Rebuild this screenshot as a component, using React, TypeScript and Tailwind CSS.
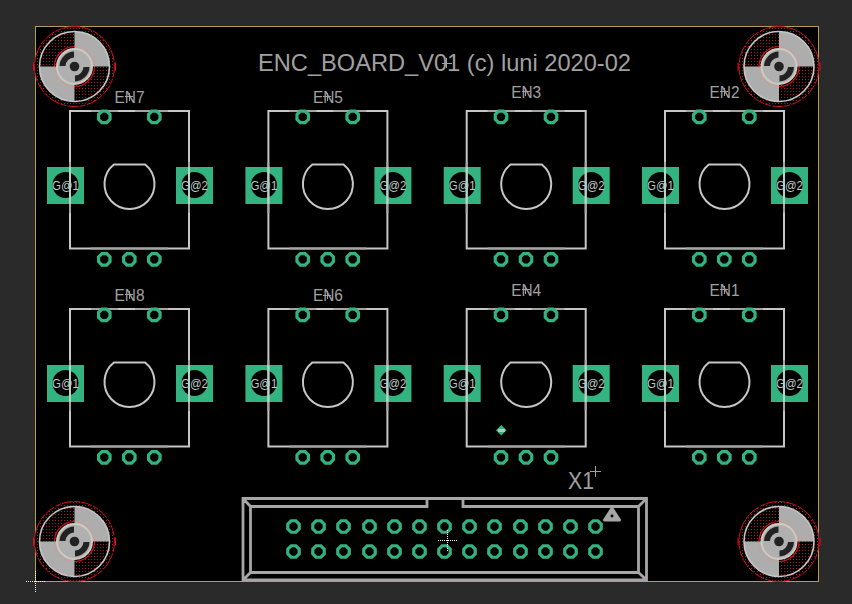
const GREEN = "#33b380";
const LINE = "#c6c6c6";
const LINE_DIM = "#a4a4a4";
const LINE_PAD = "#b4d4c6";
const TEXT = "#a0a0a0";
const CONN = "#a6a6a6";
const RED = "#d4121c";

const cols = [70, 268.4, 466.7, 665];
const rows = [111, 309];
const headerX = [293.5, 318.5, 343.5, 369.5, 394.5, 419.5, 444.5, 469.5, 494.5, 520.5, 545.5, 570.5, 595.5];

const encoders = [
  { name: "EN7", col: 0, row: 0, ly: 96.5 },
  { name: "EN5", col: 1, row: 0, ly: 96.5 },
  { name: "EN3", col: 2, row: 0, ly: 91.5 },
  { name: "EN2", col: 3, row: 0, ly: 91.5 },
  { name: "EN8", col: 0, row: 1, ly: 294.5 },
  { name: "EN6", col: 1, row: 1, ly: 295 },
  { name: "EN4", col: 2, row: 1, ly: 289.5 },
  { name: "EN1", col: 3, row: 1, ly: 289.5 },
];

function Ring({ x, y }: { x: number; y: number }) {
  const pts = [];
  for (let i = 0; i < 8; i++) {
    const a = ((i + 0.5) * Math.PI) / 4;
    pts.push(`${x + 6.2 * Math.cos(a)},${y + 6.2 * Math.sin(a)}`);
  }
  return <polygon points={pts.join(" ")} fill="#000" stroke={GREEN} strokeWidth={3.2} />;
}

function Cross({ x, y, r = 5, color = TEXT }: { x: number; y: number; r?: number; color?: string }) {
  return (
    <path d={`M${x - r} ${y}H${x + r}M${x} ${y - r}V${y + r}`} stroke={color} strokeWidth={1} shapeRendering="crispEdges" />
  );
}

function Encoder({ x, y, name, ly }: { x: number; y: number; name: string; ly: number }) {
  const cx = x + 59.5;
  return (
    <g>
      <rect x={x - 23} y={y + 56} width={37} height={37} fill={GREEN} />
      <rect x={x + 106} y={y + 56} width={37} height={37} fill={GREEN} />
      <circle cx={x - 4.5} cy={y + 74} r={13} fill="#000" />
      <circle cx={x + 124.5} cy={y + 74} r={13} fill="#000" />
      <rect x={x} y={y} width={119} height={137.5} fill="none" stroke={LINE} strokeWidth={2} />
      {/* stop mask overlap, a little darker near the pads */}
      <path
        d={`M${x + 21} ${y}H${x + 48}M${x + 65} ${y}H${x + 98}M${x + 21} ${y + 137.5}H${x + 98}M${x} ${y + 51}V${y + 56}M${x} ${y + 93}V${y + 102}M${x + 119} ${y + 51}V${y + 56}M${x + 119} ${y + 93}V${y + 102}`}
        stroke={LINE_DIM}
        strokeWidth={2}
        fill="none"
      />
      <path d={`M${x} ${y + 56}V${y + 93}M${x + 119} ${y + 56}V${y + 93}`} stroke={LINE_PAD} strokeWidth={2} fill="none" />
      <path
        d={`M${cx - 15.6} ${y + 53.5}A25 25 0 1 0 ${cx + 15.6} ${y + 53.5}Z`}
        fill="none"
        stroke={LINE}
        strokeWidth={2}
      />
      <Ring x={x + 34.3} y={y + 5.9} />
      <Ring x={x + 84.3} y={y + 5.9} />
      <Ring x={x + 34.3} y={y + 148.3} />
      <Ring x={x + 59.3} y={y + 148.3} />
      <Ring x={x + 84.3} y={y + 148.3} />
      <text x={x - 4.5} y={y + 78.5} textAnchor="middle" fontSize={13} textLength={27} lengthAdjust="spacingAndGlyphs" fill="#bcc9c4">
        G@1
      </text>
      <text x={x + 124.5} y={y + 78.5} textAnchor="middle" fontSize={13} textLength={27} lengthAdjust="spacingAndGlyphs" fill="#bcc9c4">
        G@2
      </text>
      <text x={cx} y={ly + 6} textAnchor="middle" fontSize={16} textLength={30} lengthAdjust="spacingAndGlyphs" fill={TEXT}>
        {name}
      </text>
      <Cross x={cx - 0.5} y={ly} r={4} />
    </g>
  );
}

function MountHole({ x, y }: { x: number; y: number }) {
  return (
    <g>
      <circle cx={x} cy={y} r={40} fill="url(#reddots)" stroke={RED} strokeWidth={1} strokeDasharray="11 1.5 6 1" />
      <path d={`M${x - 41} ${y - 4}V${y + 4}M${x + 41} ${y - 4}V${y + 4}`} stroke={RED} strokeWidth={1} />
      <path d={`M${x} ${y}V${y - 35}A35 35 0 0 1 ${x + 35} ${y}Z`} fill="#adadad" />
      <path d={`M${x} ${y}V${y + 35}A35 35 0 0 1 ${x - 35} ${y}Z`} fill="#adadad" />
      <circle cx={x} cy={y} r={35} fill="none" stroke="#c6c6c6" strokeWidth={1.6} />
      <path
        d={`M${x - 20} ${y}A20 20 0 0 1 ${x} ${y - 20}M${x + 20} ${y}A20 20 0 0 1 ${x} ${y + 20}`}
        fill="none"
        stroke={RED}
        strokeWidth={1.2}
      />
      <path
        d={`M${x} ${y - 20}A20 20 0 0 1 ${x + 20} ${y}M${x} ${y + 20}A20 20 0 0 1 ${x - 20} ${y}`}
        fill="none"
        stroke="#d29a9a"
        strokeWidth={1}
      />
      <circle cx={x} cy={y} r={17.5} fill="#b0b0b0" stroke="#cbcbc0" strokeWidth={2} />
      <path d={`M${x - 0.5} ${y - 15}A15 15 0 0 0 ${x - 15} ${y - 0.5}H${x - 9}A9 9 0 0 1 ${x - 0.5} ${y - 9}Z`} fill="#222" />
      <path d={`M${x + 0.5} ${y + 15}A15 15 0 0 0 ${x + 15} ${y + 0.5}H${x + 9}A9 9 0 0 1 ${x + 0.5} ${y + 9}Z`} fill="#222" />
      <circle cx={x} cy={y} r={4.8} fill="#222" />
    </g>
  );
}

export default function App() {
  return (
    <div className="relative flex h-[604px] w-[852px] overflow-hidden bg-[#2a2a2a] font-['Liberation_Sans',sans-serif]">
      <div className="ml-[35px] mt-[26px] h-[556px] w-[784px] border border-[#b39c55] bg-black" />

      <svg className="absolute inset-0" width="852" height="604" viewBox="0 0 852 604">
        <defs>
          <pattern id="reddots" width="3" height="3" patternUnits="userSpaceOnUse">
            <rect width="3" height="3" fill="#000" />
            <rect x="1" y="1" width="1" height="1" fill="#a81820" />
          </pattern>
        </defs>

        <MountHole x={74.5} y={66.5} />
        <MountHole x={779} y={66.5} />
        <MountHole x={74.5} y={541.5} />
        <MountHole x={779} y={541.5} />

        <text x={258} y={71} fontSize={24} textLength={373} lengthAdjust="spacingAndGlyphs" fill={TEXT}>
          ENC_BOARD_V01 (c) luni 2020-02
        </text>
        <Cross x={446.5} y={63} r={5} />

        {encoders.map((e) => (
          <Encoder key={e.name} x={cols[e.col]} y={rows[e.row]} name={e.name} ly={e.ly} />
        ))}

        <path d="M501.3 425L506.5 430.3L501.3 435.5L496 430.3Z" fill={GREEN} />
        <rect x="498" y="429" width="7" height="3" fill="#b4c9bf" />

        <path
          d="M427 498.5V506.5H250.5V572.5H638.5V506.5H463V498.5M243 498.5H646.5V580H243ZM243 498.5L250.5 506.5M646.5 498.5L638.5 506.5M243 580L250.5 572.5M646.5 580L638.5 572.5"
          fill="none"
          stroke={CONN}
          strokeWidth={2.8}
        />
        <path d="M612 508.5L619.5 520H604.5Z" fill={CONN} stroke={CONN} strokeWidth={3} strokeLinejoin="round" />
        <circle cx={612} cy={516} r={1.4} fill="#000" />

        {headerX.map((x) => (
          <g key={x}>
            <Ring x={x} y={526.5} />
            <Ring x={x} y={551.5} />
          </g>
        ))}

        <text x={568} y={489} fontSize={23} textLength={26} lengthAdjust="spacingAndGlyphs" fill={TEXT}>
          X1
        </text>
        <Cross x={595.5} y={471.5} r={5.5} />

        <path d="M438 540.5H457M447.5 530V551" stroke="#fff" strokeWidth={1} strokeDasharray="1 1" />
        <path d="M26 581.5H46M35.5 571V592" stroke="#fff" strokeWidth={1} strokeDasharray="1 1" />
      </svg>
    </div>
  );
}
